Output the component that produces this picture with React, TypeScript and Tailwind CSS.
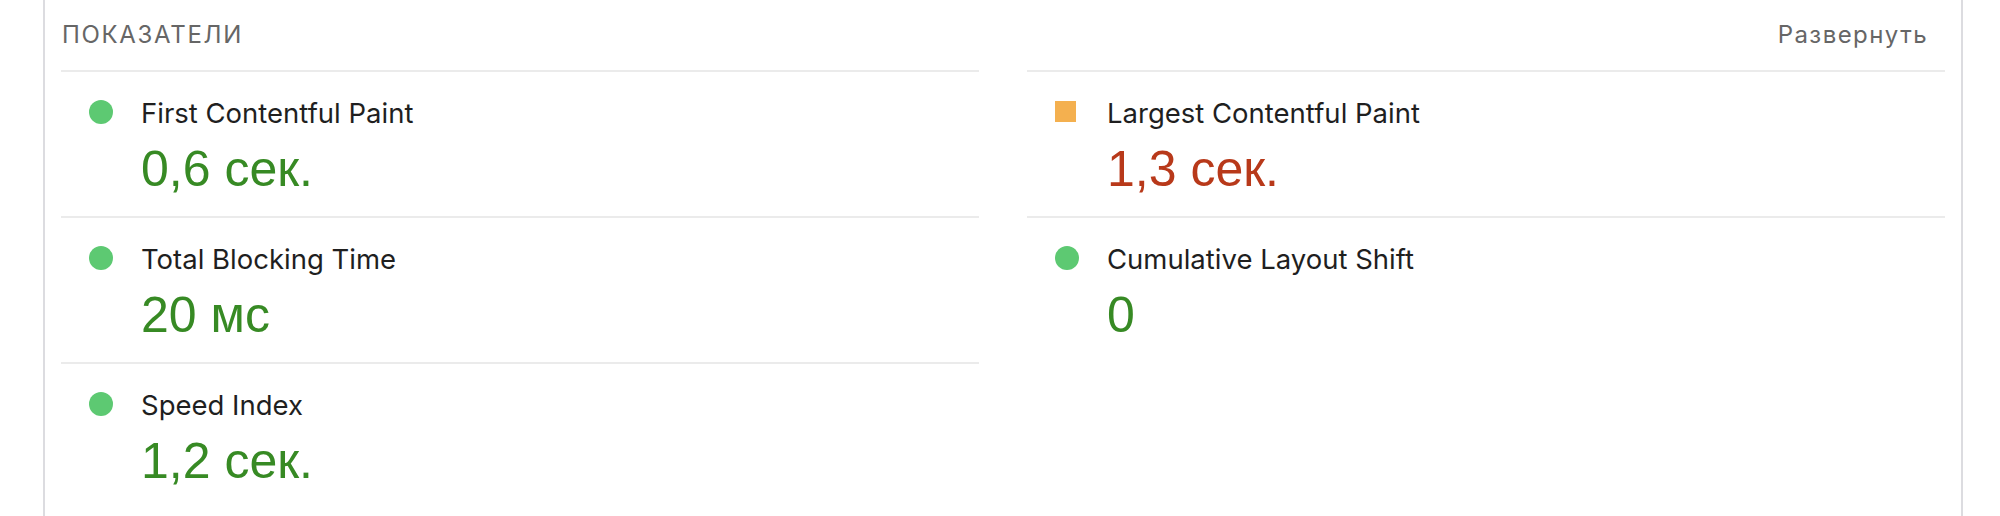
const metrics = [
  { id: "fcp", title: "First Contentful Paint", value: "0,6 сек.", status: "pass" },
  { id: "lcp", title: "Largest Contentful Paint", value: "1,3 сек.", status: "average" },
  { id: "tbt", title: "Total Blocking Time", value: "20 мс", status: "pass" },
  { id: "cls", title: "Cumulative Layout Shift", value: "0", status: "pass" },
  { id: "si", title: "Speed Index", value: "1,2 сек.", status: "pass" },
];

const Indicator = ({ status }: { status: string }) => (
  <div className="w-6 shrink-0 mt-1">
    {status === "pass" ? (
      <div className="w-6 h-6 rounded-full bg-[#5dc972]" />
    ) : (
      <div className="w-[21px] h-[21px] mt-[1px] bg-[#f4b04f]" />
    )}
  </div>
);

const MetricItem = ({ title, value, status }: { title: string; value: string; status: string }) => (
  <div className="h-[146px] border-t-2 border-[#ebebeb] pt-6 pl-7 flex gap-7">
    <Indicator status={status} />
    <div className="flex flex-col">
      <div className="text-[27.5px] leading-[34px] text-[#1f1f1f]">{title}</div>
      <div
        className={
          status === "pass"
            ? "mt-[9px] font-['Liberation_Sans',sans-serif] text-[50px] leading-[60px] text-[#378a24]"
            : "mt-[9px] font-['Liberation_Sans',sans-serif] text-[50px] leading-[60px] text-[#b8391a]"
        }
      >
        {value}
      </div>
    </div>
  </div>
);

export default function App() {
  return (
    <div className="w-[2000px] h-[516px] overflow-hidden bg-white font-['Inter','Liberation_Sans',sans-serif]">
      <div className="ml-[43px] w-[1920px] min-h-[516px] border-x-2 border-[#dcdce0] px-4">
        <div className="h-[70px] flex items-center justify-between">
          <div className="text-[24px] leading-[36px] tracking-[0.07em] text-[#666666] pl-[1px]">
            ПОКАЗАТЕЛИ
          </div>
          <button className="text-[24px] leading-[36px] tracking-[0.06em] text-[#666666] pr-[17px]">
            Развернуть
          </button>
        </div>
        <div className="grid grid-cols-2 gap-x-12">
          {metrics.map((m) => (
            <MetricItem key={m.id} title={m.title} value={m.value} status={m.status} />
          ))}
        </div>
      </div>
    </div>
  );
}
